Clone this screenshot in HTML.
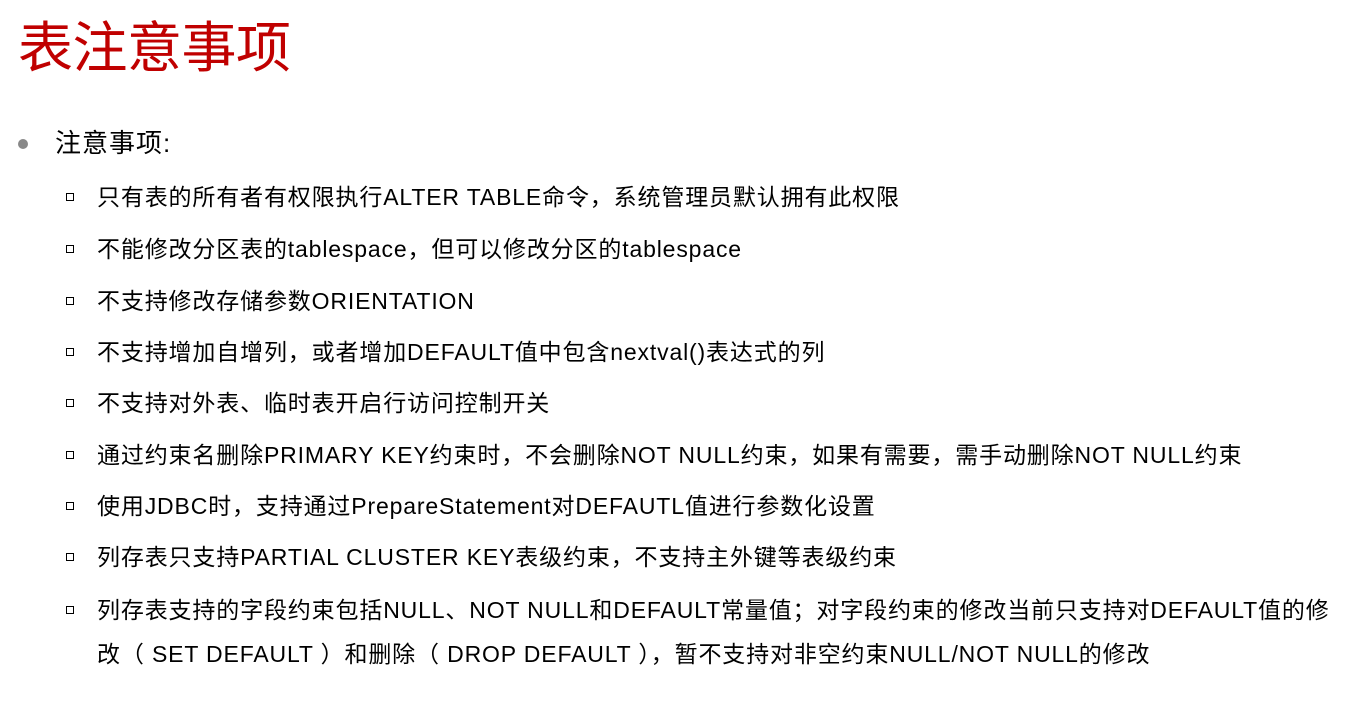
<!DOCTYPE html>
<html><head><meta charset="utf-8"><style>
body{margin:0;width:1368px;height:710px;background:#fff;position:relative;overflow:hidden;font-family:"Liberation Sans","Noto Sans CJK SC",sans-serif;color:#000}
.t{position:absolute;left:18px;top:15px;font-size:55px;color:#C00000;line-height:66px;letter-spacing:-0.5px}
.l1{position:absolute;left:55px;top:127px;font-size:26px;line-height:32px;letter-spacing:1px}
.dot{position:absolute;left:18px;top:139px;width:10px;height:10px;border-radius:50%;background:#888}
.s{position:absolute;left:97px;font-size:23px;line-height:44px;width:1250px;letter-spacing:0.85px}
.sq{position:absolute;left:66px;width:6px;height:6px;border:1.5px solid #000}
</style></head><body>
<div class="t">表注意事项</div>
<div class="dot"></div>
<div class="l1">注意事项:</div>
<div class="sq" style="top:193px"></div><div class="s" style="top:175px">只有表的所有者有权限执行ALTER TABLE命令，系统管理员默认拥有此权限</div>
<div class="sq" style="top:245px"></div><div class="s" style="top:227px">不能修改分区表的tablespace，但可以修改分区的tablespace</div>
<div class="sq" style="top:297px"></div><div class="s" style="top:279px">不支持修改存储参数ORIENTATION</div>
<div class="sq" style="top:348px"></div><div class="s" style="top:330px">不支持增加自增列，或者增加DEFAULT值中包含nextval()表达式的列</div>
<div class="sq" style="top:399px"></div><div class="s" style="top:381px">不支持对外表、临时表开启行访问控制开关</div>
<div class="sq" style="top:451px"></div><div class="s" style="top:433px">通过约束名删除PRIMARY KEY约束时，不会删除NOT NULL约束，如果有需要，需手动删除NOT NULL约束</div>
<div class="sq" style="top:502px"></div><div class="s" style="top:484px">使用JDBC时，支持通过PrepareStatement对DEFAUTL值进行参数化设置</div>
<div class="sq" style="top:553px"></div><div class="s" style="top:535px">列存表只支持PARTIAL CLUSTER KEY表级约束，不支持主外键等表级约束</div>
<div class="sq" style="top:606px"></div><div class="s" style="top:588px">列存表支持的字段约束包括NULL、NOT NULL和DEFAULT常量值；对字段约束的修改当前只支持对DEFAULT值的修<br>改（ SET DEFAULT ）和删除（ DROP DEFAULT ），暂不支持对非空约束NULL/NOT NULL的修改</div>
</body></html>
